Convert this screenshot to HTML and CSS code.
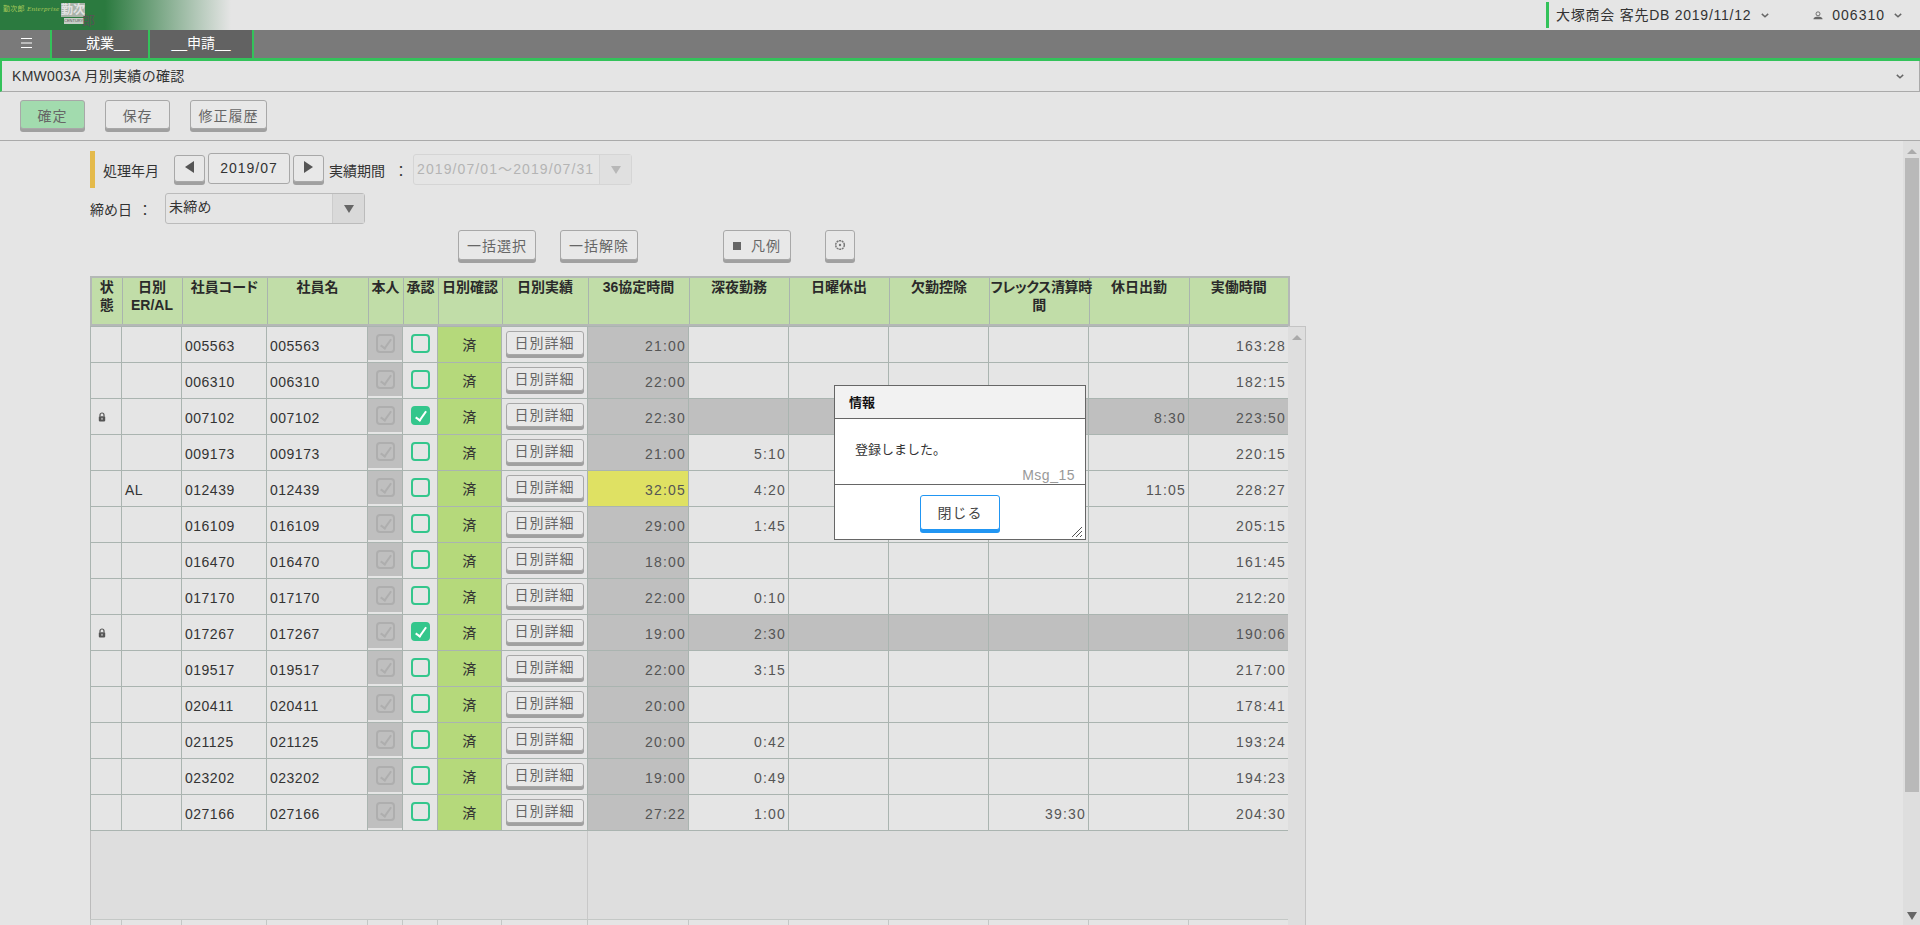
FILE: index.html
```html
<!DOCTYPE html>
<html lang="ja">

<head>
    <meta charset="UTF-8">
    <title>KMW003A 月別実績の確認</title>
    <link rel="stylesheet" href="styles.css">
</head>

<body>
    <svg class="defs" width="0" height="0">
        <symbol id="lock" viewBox="0 0 10 12">
            <path d="M2.5 5V3.500a2.500 2.500 0 0 1 5 0V5" fill="none" stroke="#555" stroke-width="1.500" />
            <rect x="1" y="5" width="8" height="6.500" rx="1" fill="#555" />
            <rect x="4.300" y="7" width="1.400" height="2.400" fill="#ddd" />
        </symbol>
        <symbol id="chev" viewBox="0 0 10 6">
            <path d="M1 1l4 3.600L9 1" fill="none" stroke="#666" stroke-width="1.800" />
        </symbol>
    </svg>

    <header class="topbar">
        <div class="logo">
            <span class="logo-name">勤次郎 <i>Enterprise</i></span>
            <span class="logo-mark"><b>勤次</b><small>CENTURY</small><em>郎</em></span>
        </div>
        <div class="company">大塚商会 客先DB 2019/11/12</div>
        <svg class="chev"><use href="#chev" /></svg>
        <svg class="user" viewBox="0 0 12 10">
            <circle cx="6" cy="3" r="2.400" fill="none" stroke="#666" stroke-width="1.100" />
            <path d="M0.500 9.500c0-2 2-2.600 3.500-3h4c1.500.4 3.500 1 3.500 3z" fill="#666" />
        </svg>
        <div class="userid">006310</div>
        <svg class="chev"><use href="#chev" /></svg>
    </header>

    <nav class="menu">
        <a class="tab tab-burger">
            <svg class="burger" viewBox="0 0 11 10">
                <path d="M0 .5h11M0 5h11M0 9.500h11" stroke="#fff" stroke-width="1" />
            </svg>
        </a>
        <a class="tab tab-job">__就業__</a>
        <a class="tab tab-apply">__申請__</a>
    </nav>

    <div class="titlebar">
        <span>KMW003A 月別実績の確認</span>
        <svg class="chev"><use href="#chev" /></svg>
    </div>

    <div class="toolbar">
        <button class="btn btn-confirm">確定</button>
        <button class="btn btn-save">保存</button>
        <button class="btn btn-history">修正履歴</button>
    </div>

    <div class="content">
        <main class="main">
            <div class="period-row">
                <span class="mark"></span>
                <span class="period-label">処理年月</span>
                <button class="btn btn-arrow"><i class="tri tri-left"></i></button>
                <span class="month">2019/07</span>
                <button class="btn btn-arrow"><i class="tri tri-right"></i></button>
                <span class="range-label">実績期間</span>
                <span class="colon">：</span>
                <div class="select select-off">
                    <span>2019/07/01～2019/07/31</span>
                    <i class="drop"><i class="tri tri-down"></i></i>
                </div>
            </div>
            <div class="closing-row">
                <span class="closing-label">締め日</span>
                <span class="colon">：</span>
                <div class="select select-closing">
                    <span>未締め</span>
                    <i class="drop"><i class="tri tri-down"></i></i>
                </div>
            </div>
            <div class="action-row">
                <button class="btn btn-act">一括選択</button>
                <button class="btn btn-act">一括解除</button>
                <button class="btn btn-legend"><i class="square"></i>凡例</button>
                <button class="btn btn-gear">
                    <svg class="gear" viewBox="0 0 10 10">
                        <circle cx="5" cy="5" r="3.600" fill="none" stroke="#777" stroke-width="1.200" stroke-dasharray="1.700 .55" />
                        <circle cx="5" cy="5" r="1" fill="#777" />
                    </svg>
                </button>
            </div>

            <div class="grid">
                <table class="sheet head">
                    <colgroup>
                        <col class="c1"><col class="c2"><col class="c3"><col class="c4"><col class="c5"><col class="c5"><col class="c6"><col class="c7"><col class="c8"><col class="c9"><col class="c9"><col class="c9"><col class="c9"><col class="c9"><col class="c9">
                    </colgroup>
                    <tr>
                        <th>状態</th><th>日別<br>ER/AL</th><th>社員コード</th><th>社員名</th><th>本人</th><th>承認</th><th>日別確認</th><th>日別実績</th><th>36協定時間</th><th>深夜勤務</th><th>日曜休出</th><th>欠勤控除</th><th class="th-flex">フレックス清算時<br>間</th><th>休日出勤</th><th>実働時間</th>
                    </tr>
                </table>
                <div class="grid-body">
                    <div class="grid-left">
                        <table class="sheet rows">
                            <colgroup>
                                <col class="c1"><col class="c2"><col class="c3"><col class="c4"><col class="c5"><col class="c5"><col class="c6"><col class="c7"><col class="c8"><col class="c9"><col class="c9"><col class="c9"><col class="c9"><col class="c9"><col class="c9">
                            </colgroup>
                            <tr><td></td><td></td><td>005563</td><td>005563</td><td class="self"><i class="cb-off"></i></td><td class="ok"><i class="cb"></i></td><td class="done">済</td><td class="act"><button class="btn btn-day">日別詳細</button></td><td class="t gray">21:00</td><td class="t"></td><td></td><td></td><td></td><td></td><td class="t">163:28</td></tr>
                            <tr><td></td><td></td><td>006310</td><td>006310</td><td class="self"><i class="cb-off"></i></td><td class="ok"><i class="cb"></i></td><td class="done">済</td><td class="act"><button class="btn btn-day">日別詳細</button></td><td class="t gray">22:00</td><td class="t"></td><td></td><td></td><td></td><td></td><td class="t">182:15</td></tr>
                            <tr class="locked"><td class="st"><svg class="lock"><use href="#lock" /></svg></td><td></td><td>007102</td><td>007102</td><td class="self"><i class="cb-off"></i></td><td class="ok"><i class="cb on"></i></td><td class="done">済</td><td class="act"><button class="btn btn-day">日別詳細</button></td><td class="t gray">22:30</td><td class="t"></td><td></td><td></td><td></td><td class="t">8:30</td><td class="t">223:50</td></tr>
                            <tr><td></td><td></td><td>009173</td><td>009173</td><td class="self"><i class="cb-off"></i></td><td class="ok"><i class="cb"></i></td><td class="done">済</td><td class="act"><button class="btn btn-day">日別詳細</button></td><td class="t gray">21:00</td><td class="t">5:10</td><td></td><td></td><td></td><td></td><td class="t">220:15</td></tr>
                            <tr><td></td><td>AL</td><td>012439</td><td>012439</td><td class="self"><i class="cb-off"></i></td><td class="ok"><i class="cb"></i></td><td class="done">済</td><td class="act"><button class="btn btn-day">日別詳細</button></td><td class="t over">32:05</td><td class="t">4:20</td><td></td><td></td><td></td><td class="t">11:05</td><td class="t">228:27</td></tr>
                            <tr><td></td><td></td><td>016109</td><td>016109</td><td class="self"><i class="cb-off"></i></td><td class="ok"><i class="cb"></i></td><td class="done">済</td><td class="act"><button class="btn btn-day">日別詳細</button></td><td class="t gray">29:00</td><td class="t">1:45</td><td></td><td></td><td></td><td></td><td class="t">205:15</td></tr>
                            <tr><td></td><td></td><td>016470</td><td>016470</td><td class="self"><i class="cb-off"></i></td><td class="ok"><i class="cb"></i></td><td class="done">済</td><td class="act"><button class="btn btn-day">日別詳細</button></td><td class="t gray">18:00</td><td class="t"></td><td></td><td></td><td></td><td></td><td class="t">161:45</td></tr>
                            <tr><td></td><td></td><td>017170</td><td>017170</td><td class="self"><i class="cb-off"></i></td><td class="ok"><i class="cb"></i></td><td class="done">済</td><td class="act"><button class="btn btn-day">日別詳細</button></td><td class="t gray">22:00</td><td class="t">0:10</td><td></td><td></td><td></td><td></td><td class="t">212:20</td></tr>
                            <tr class="locked"><td class="st"><svg class="lock"><use href="#lock" /></svg></td><td></td><td>017267</td><td>017267</td><td class="self"><i class="cb-off"></i></td><td class="ok"><i class="cb on"></i></td><td class="done">済</td><td class="act"><button class="btn btn-day">日別詳細</button></td><td class="t gray">19:00</td><td class="t">2:30</td><td></td><td></td><td></td><td></td><td class="t">190:06</td></tr>
                            <tr><td></td><td></td><td>019517</td><td>019517</td><td class="self"><i class="cb-off"></i></td><td class="ok"><i class="cb"></i></td><td class="done">済</td><td class="act"><button class="btn btn-day">日別詳細</button></td><td class="t gray">22:00</td><td class="t">3:15</td><td></td><td></td><td></td><td></td><td class="t">217:00</td></tr>
                            <tr><td></td><td></td><td>020411</td><td>020411</td><td class="self"><i class="cb-off"></i></td><td class="ok"><i class="cb"></i></td><td class="done">済</td><td class="act"><button class="btn btn-day">日別詳細</button></td><td class="t gray">20:00</td><td class="t"></td><td></td><td></td><td></td><td></td><td class="t">178:41</td></tr>
                            <tr><td></td><td></td><td>021125</td><td>021125</td><td class="self"><i class="cb-off"></i></td><td class="ok"><i class="cb"></i></td><td class="done">済</td><td class="act"><button class="btn btn-day">日別詳細</button></td><td class="t gray">20:00</td><td class="t">0:42</td><td></td><td></td><td></td><td></td><td class="t">193:24</td></tr>
                            <tr><td></td><td></td><td>023202</td><td>023202</td><td class="self"><i class="cb-off"></i></td><td class="ok"><i class="cb"></i></td><td class="done">済</td><td class="act"><button class="btn btn-day">日別詳細</button></td><td class="t gray">19:00</td><td class="t">0:49</td><td></td><td></td><td></td><td></td><td class="t">194:23</td></tr>
                            <tr><td></td><td></td><td>027166</td><td>027166</td><td class="self"><i class="cb-off"></i></td><td class="ok"><i class="cb"></i></td><td class="done">済</td><td class="act"><button class="btn btn-day">日別詳細</button></td><td class="t gray">27:22</td><td class="t">1:00</td><td></td><td></td><td class="t">39:30</td><td></td><td class="t">204:30</td></tr>
                        </table>
                        <div class="blank">
                            <div class="blank-left"></div>
                            <div class="blank-right"></div>
                        </div>
                        <table class="sheet foot">
                            <colgroup>
                                <col class="c1"><col class="c2"><col class="c3"><col class="c4"><col class="c5"><col class="c5"><col class="c6"><col class="c7"><col class="c8"><col class="c9"><col class="c9"><col class="c9"><col class="c9"><col class="c9"><col class="c9">
                            </colgroup>
                            <tr><td></td><td></td><td></td><td></td><td></td><td></td><td></td><td></td><td></td><td></td><td></td><td></td><td></td><td></td><td></td></tr>
                        </table>
                    </div>
                    <div class="grid-scroll"><i class="tri tri-up"></i></div>
                </div>
            </div>
        </main>

        <aside class="page-scroll">
            <i class="tri tri-up"></i>
            <div class="thumb"></div>
            <i class="tri tri-down"></i>
        </aside>
    </div>

    <div class="dialog">
        <div class="dialog-title">情報</div>
        <div class="dialog-body">
            <p>登録しました。</p>
            <span class="msg-id">Msg_15</span>
        </div>
        <div class="dialog-foot">
            <button class="btn btn-close">閉じる</button>
            <svg class="grip" viewBox="0 0 12 12">
                <path d="M1 11L11 1M5 11l6-6M9 11l2-2" stroke="#555" stroke-width="1" fill="none" />
            </svg>
        </div>
    </div>
</body>

</html>
```

FILE: styles.css
```css
html {
    background-color: #e5e5e5;
}

body {
    margin: 0;
    height: 925px;
    overflow: hidden;
    color: #333;
    font-family: "Liberation Sans", "Noto Sans CJK JP", sans-serif;
    font-size: 14px;
}

.defs {
    position: absolute;
}

/* top bar */
.topbar {
    display: flex;
    align-items: center;
    height: 30px;
}

.logo {
    display: flex;
    width: 232px;
    height: 30px;
    margin-right: auto;
    background: linear-gradient(to right, #2b7a3f 0, #2b7a3f 105px, #e5e5e5 231px);
    overflow: hidden;
}

.logo-name {
    width: 58px;
    margin: 3px 0 0 3px;
    color: #a9c95a;
    font-family: "Liberation Serif", "Noto Sans CJK JP", serif;
    font-size: 7px;
    letter-spacing: .3px;
    line-height: 12px;
    white-space: nowrap;
}

.logo-mark {
    position: relative;
    width: 34px;
}

.logo-mark b {
    display: block;
    width: 24px;
    margin-top: 3px;
    background-color: #a9b3aa;
    color: #e2e2e2;
    font-size: 12px;
    line-height: 14px;
    font-weight: 700;
    white-space: nowrap;
}

.logo-mark small {
    display: block;
    width: 20px;
    margin: 1px 0 0 3px;
    background-color: #c7cfc7;
    color: #555;
    font-size: 4px;
    line-height: 6px;
    overflow: hidden;
}

.logo-mark em {
    position: absolute;
    left: 21px;
    top: 13px;
    color: #555;
    font-style: normal;
    font-size: 13px;
    line-height: 15px;
}

.company {
    height: 26px;
    padding-left: 7px;
    border-left: 3px solid #33c25a;
    line-height: 26px;
    letter-spacing: .75px;
    white-space: nowrap;
}

.chev {
    width: 8px;
    height: 5px;
}

.company + .chev {
    margin-left: 10px;
}

.user {
    width: 10px;
    height: 9px;
    margin-left: 44px;
}

.userid {
    margin-left: 9px;
    letter-spacing: 1px;
}

.userid + .chev {
    margin: 0 18px 0 9px;
}

/* menu */
.menu {
    display: flex;
    height: 28px;
    padding-left: 2px;
    background-color: #7a7a7a;
    border-bottom: 3px solid #33c25a;
}

.tab {
    display: block;
    border-right: 2px solid #33c25a;
    background-color: #626262;
    color: #fff;
    line-height: 27px;
    text-align: center;
}

.tab-burger {
    width: 48px;
    background-color: #7a7a7a;
}

.burger {
    display: inline-block;
    width: 11px;
    height: 10px;
}

.tab-job {
    width: 96px;
}

.tab-apply {
    width: 102px;
}

/* title */
.titlebar {
    display: flex;
    justify-content: space-between;
    align-items: center;
    height: 30px;
    padding: 0 15px 0 10px;
    border-left: 2px solid #33c25a;
    border-right: 1px solid #aaa;
    border-bottom: 1px solid #aaa;
}

.titlebar span {
    padding-bottom: 2px;
    letter-spacing: .3px;
}

/* buttons */
.btn {
    display: inline-block;
    padding: 0;
    border: 1px solid #a8a8a8;
    border-radius: 3px;
    background-color: #e8e8e8;
    box-shadow: 0 3px 0 #a0a0a0;
    color: #666;
    font-family: inherit;
    font-size: 14px;
    letter-spacing: 1px;
}

.toolbar {
    display: flex;
    gap: 20px;
    height: 49px;
    padding: 8px 0 0 20px;
    box-sizing: border-box;
    border-bottom: 1px solid #aaa;
}

.toolbar .btn {
    height: 29px;
}

.btn-confirm {
    width: 65px;
    background-color: #a2dbae;
}

.btn-save {
    width: 65px;
}

.btn-history {
    width: 77px;
}

/* content */
.content {
    display: flex;
    height: 784px;
}

.main {
    flex: 1;
    padding: 10px 0 0 90px;
    min-width: 0;
}

.period-row {
    display: flex;
    align-items: center;
    height: 37px;
}

.mark {
    width: 5px;
    height: 37px;
    background-color: #e4ba4b;
}

.period-label {
    margin: 0 16px 0 8px;
    width: 55px;
    white-space: nowrap;
}

.btn-arrow {
    width: 31px;
    height: 27px;
    margin-bottom: 3px;
}

.month {
    width: 80px;
    height: 29px;
    margin: 0 3px 2px;
    border: 1px solid #a8a8a8;
    border-radius: 3px;
    background-color: #e8e8e8;
    line-height: 29px;
    text-align: center;
    letter-spacing: 1px;
}

.range-label {
    margin-left: 5px;
    white-space: nowrap;
}

.colon {
    width: 14px;
    margin-left: 9px;
    text-align: center;
}

.select {
    display: flex;
    justify-content: space-between;
    box-sizing: border-box;
    border: 1px solid #bbb;
    border-radius: 3px;
    white-space: nowrap;
}

.select span {
    padding-left: 3px;
    letter-spacing: .2px;
}

.drop {
    display: flex;
    align-items: center;
    justify-content: center;
    width: 31px;
    border-left: 1px solid #ccc;
    background-color: #d9d9d9;
}

.select-off {
    width: 219px;
    height: 31px;
    margin: 0 0 0 5px;
    border-color: #d5d5d5;
    color: #b4b4b4;
    line-height: 28px;
}

.select-off span {
    letter-spacing: 1.1px;
}

.select-off .drop {
    background-color: #e0e0e0;
    border-left-color: #d5d5d5;
}

.select-off .tri-down {
    border-top-color: #b8b8b8;
}

.closing-row {
    display: flex;
    align-items: center;
    height: 31px;
    margin-top: 5px;
}

.closing-label {
    width: 40px;
    white-space: nowrap;
}

.select-closing {
    width: 200px;
    height: 31px;
    margin-left: 13px;
    line-height: 26px;
}

.closing-row .colon {
    margin-left: 8px;
}

.action-row {
    display: flex;
    height: 33px;
    margin-top: 6px;
    padding-left: 368px;
}

.action-row .btn {
    height: 30px;
}

.btn-act {
    width: 78px;
    margin-right: 24px;
}

.btn-legend {
    width: 68px;
    margin-left: 61px;
}

.square {
    display: inline-block;
    width: 8px;
    height: 8px;
    margin-right: 10px;
    background-color: #666;
    vertical-align: 1px;
}

.btn-gear {
    width: 30px;
    margin-left: 34px;
}

.gear {
    display: block;
    width: 12px;
    height: 12px;
    margin: 0 auto;
}

/* triangles */
.tri {
    display: inline-block;
    width: 0;
    height: 0;
    border-style: solid;
    border-color: transparent;
}

.tri-left {
    border-width: 6px 9px 6px 0;
    border-right-color: #555;
}

.tri-right {
    border-width: 6px 0 6px 9px;
    border-left-color: #555;
}

.tri-down {
    border-width: 8px 5px 0;
    border-top-color: #666;
}

.tri-up {
    border-width: 0 5px 5px;
    border-bottom-color: #aaa;
}

/* table */
.grid {
    width: 1216px;
    margin-top: 13px;
}

.sheet {
    width: 1198px;
    border-collapse: collapse;
    table-layout: fixed;
}

.c1 { width: 31px; }
.c2 { width: 60px; }
.c3 { width: 85px; }
.c4 { width: 101px; }
.c5 { width: 35px; }
.c6 { width: 64px; }
.c7 { width: 86px; }
.c8 { width: 101px; }
.c9 { width: 100px; }

.head {
    border: 2px solid #b4b8b6;
}

.head th {
    height: 48px;
    padding: 0 1px;
    box-sizing: border-box;
    border: 1px solid #a9b4ae;
    background-color: #c1dda8;
    color: #2a2a2a;
    font-size: 14px;
    font-weight: 700;
    font-feature-settings: "palt";
    line-height: 18px;
    vertical-align: top;
}

.head .th-flex {
    letter-spacing: -.4px;
    white-space: nowrap;
}

.grid-body {
    display: flex;
    height: 600px;
}

.grid-left {
    width: 1198px;
}

.rows td {
    height: 36px;
    padding: 3px 0 0 3px;
    box-sizing: border-box;
    border: 1px solid #aab4b0;
    letter-spacing: .5px;
    white-space: nowrap;
}

.rows {
    border-bottom: 1px solid #aab4b0;
}

.rows .t {
    padding-right: 2px;
    text-align: right;
    color: #555;
    letter-spacing: 1.2px;
}

.rows .gray,
.locked td {
    background-color: #bfbfbf;
}

.rows .over {
    background-color: #dfe163;
}

.rows .done,
.locked .done {
    padding: 0 0 2px;
    background-color: #b5d97b;
    text-align: center;
}

.locked .ok,
.locked .act {
    background-color: #e5e5e5;
}

.locked td:first-child,
.locked td:nth-child(2),
.locked td:nth-child(3),
.locked td:nth-child(4) {
    background-color: #e5e5e5;
}

.rows .st {
    padding: 0 0 0 7px;
}

.lock {
    display: block;
    width: 8px;
    height: 10px;
}

.rows .self {
    padding: 0;
    background-color: #bfbfbf;
    box-shadow: inset 0 -2px 0 #e5e5e5;
}

.rows .ok {
    padding: 0;
}

.cb-off,
.cb {
    display: block;
    position: relative;
    box-sizing: border-box;
    width: 19px;
    height: 19px;
    margin: -2px auto 0;
    border-radius: 4px;
}

.cb-off {
    border: 2px solid #aeaeae;
}

.cb-off::after,
.cb.on::after {
    content: "";
    position: absolute;
    left: 5px;
    top: 1px;
    width: 4px;
    height: 10px;
    border: solid #aeaeae;
    border-width: 0 2px 2px 0;
    transform: rotate(35deg);
}

.cb {
    border: 2px solid #34c68c;
}

.cb.on {
    background-color: #34c68c;
}

.cb.on::after {
    border-color: #fff;
}

.rows .act {
    padding: 0 0 3px;
    text-align: center;
}

.btn-day {
    width: 78px;
    height: 24px;
    line-height: 22px;
}

.blank {
    display: flex;
    height: 88px;
}

.blank-left {
    width: 496px;
    border-left: 1px solid #bbb;
    border-right: 1px solid #c8c8c8;
    background-color: #dedede;
}

.blank-right {
    flex: 1;
    background-color: #dedede;
}

.foot td {
    height: 20px;
    border: 1px solid #c4c8c6;
}

.grid-scroll {
    flex: 1;
    display: flex;
    justify-content: center;
    padding-top: 8px;
    height: 600px;
    box-sizing: border-box;
    border: solid #c4c4c4;
    border-width: 1px 1px 0 0;
    background-color: #dedede;
}

.page-scroll {
    display: flex;
    flex-direction: column;
    align-items: center;
    width: 17px;
    background-color: #dedede;
}

.page-scroll .tri-up {
    margin-top: 8px;
}

.thumb {
    width: 14px;
    height: 634px;
    margin: 4px 0 120px;
    background-color: #b9b9b9;
}

/* dialog */
.dialog {
    position: absolute;
    left: 834px;
    top: 385px;
    width: 252px;
    height: 155px;
    box-sizing: border-box;
    border: 1px solid #666;
    background-color: #fff;
}

.dialog-title {
    height: 32px;
    padding-left: 14px;
    border-bottom: 1px solid #666;
    background-color: #f2f2f2;
    color: #111;
    font-weight: 700;
    font-size: 13px;
    line-height: 34px;
}

.dialog-body {
    position: relative;
    height: 65px;
    border-bottom: 1px solid #666;
}

.dialog-body p {
    margin: 0;
    padding: 22px 0 0 20px;
    font-size: 13px;
    line-height: 18px;
}

.msg-id {
    position: absolute;
    right: 10px;
    bottom: 0;
    color: #999;
    font-size: 14px;
    letter-spacing: .5px;
    line-height: 18px;
}

.dialog-foot {
    position: relative;
    height: 54px;
    box-sizing: border-box;
    padding-top: 10px;
    text-align: center;
}

.btn-close {
    width: 80px;
    height: 35px;
    padding-bottom: 2px;
    border-color: #2196f3;
    background-color: #fff;
    box-shadow: 0 3px 0 #2196f3;
    color: #444;
}

.grip {
    position: absolute;
    right: 2px;
    bottom: 1px;
    width: 12px;
    height: 12px;
}
```
